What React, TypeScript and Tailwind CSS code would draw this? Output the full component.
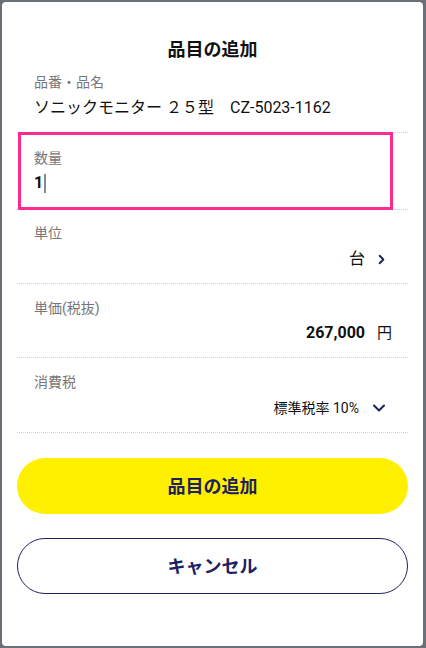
import { ChevronDown, ChevronRight } from "lucide-react";

const font = { fontFamily: 'Roboto, "Noto Sans CJK JP", sans-serif' };

const Label = ({ children }: { children: React.ReactNode }) => (
  <div className="text-[14px] leading-[18px] text-[#777]">{children}</div>
);

const App = () => {
  return (
    <div
      className="w-[426px] h-[648px] bg-[#6b7078] pt-[2px] pl-[2px] pr-[3px] pb-[2px]"
      style={font}
    >
      <div className="h-full bg-white rounded-[4px] px-[15px] flex flex-col">
        <h1 className="pt-[36px] text-center text-[18px] leading-[24px] font-bold text-[#111]">
          品目の追加
        </h1>

        {/* 品番・品名 */}
        <div className="h-[71px] pt-[11px] pl-[17px] border-b border-dotted border-[#cfcfcf]">
          <Label>品番・品名</Label>
          <div className="mt-[6px] text-[16px] leading-[22px] text-[#111]">
            ソニックモニター ２５型　CZ-5023-1162
          </div>
        </div>

        {/* 数量 */}
        <div className="border-b border-dotted border-[#cfcfcf]">
          <div className="ml-px -mt-px -mb-px w-[375px] h-[78px] border-[3px] border-[#fe2c91] pt-[14px] pl-[13px]">
            <Label>数量</Label>
            <div className="mt-[5px] flex items-center h-[22px]">
              <span className="text-[16px] font-bold text-[#111]">1</span>
              <span className="ml-px w-[2px] h-[19px] bg-[#888]" />
            </div>
          </div>
        </div>

        {/* 単位 */}
        <div className="h-[74px] pt-[14px] pl-[17px] pr-[19px] border-b border-dotted border-[#cfcfcf]">
          <Label>単位</Label>
          <div className="mt-[6px] flex justify-end items-center gap-[9px] h-[22px]">
            <span className="text-[16px] text-[#111]">台</span>
            <ChevronRight size={15} strokeWidth={3} className="text-[#1e2161]" />
          </div>
        </div>

        {/* 単価 */}
        <div className="h-[74px] pt-[15px] pl-[17px] pr-[16px] border-b border-dotted border-[#cfcfcf]">
          <Label>単価(税抜)</Label>
          <div className="mt-[5px] flex justify-end items-center gap-[12px] h-[22px] text-[#111]">
            <span className="text-[16px] font-bold">267,000</span>
            <span className="text-[15px]">円</span>
          </div>
        </div>

        {/* 消費税 */}
        <div className="h-[75px] pt-[15px] pl-[17px] pr-[19px] border-b border-dotted border-[#cfcfcf]">
          <Label>消費税</Label>
          <div className="mt-[6px] flex justify-end items-center gap-[10px] h-[22px] text-[#111]">
            <span className="text-[14px]">標準税率 10%</span>
            <ChevronDown size={20} strokeWidth={2.5} className="text-[#1e2161]" />
          </div>
        </div>

        <button className="mt-[25px] h-[56px] w-full rounded-full bg-[#fff000] text-[18px] font-bold text-[#1e2161]">
          品目の追加
        </button>
        <button className="mt-[24px] h-[56px] w-full rounded-full border border-[#1e2161] bg-white text-[18px] font-bold text-[#1e2161]">
          キャンセル
        </button>
      </div>
    </div>
  );
};

export default App;
